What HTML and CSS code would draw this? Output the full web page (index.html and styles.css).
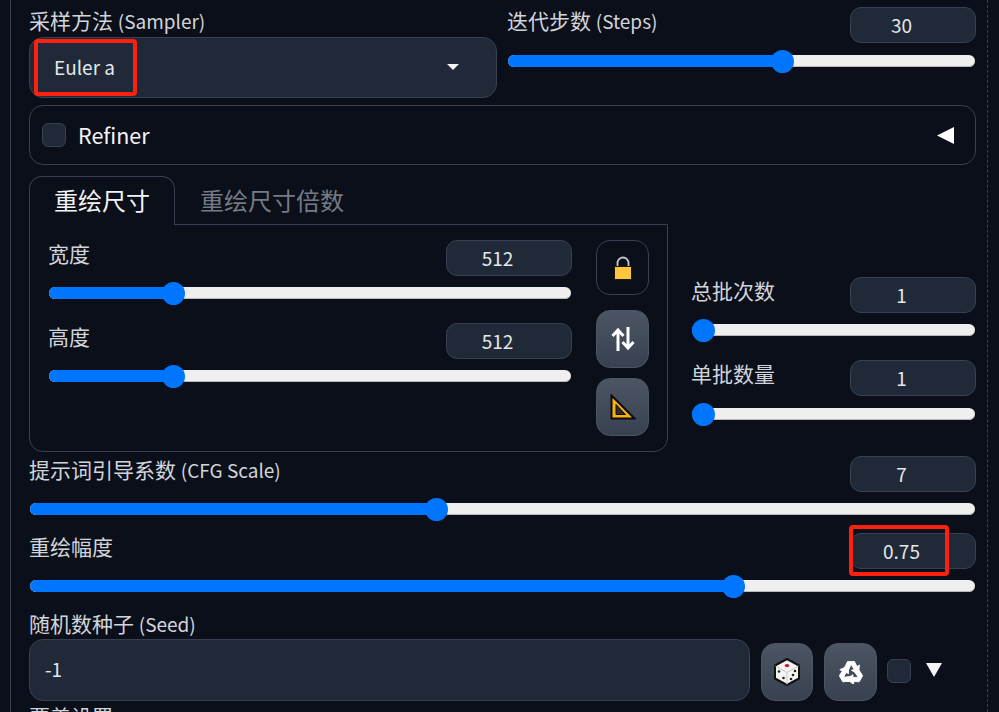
FILE: index.html
```html
<!DOCTYPE html>
<html lang="zh">
<head>
<meta charset="utf-8">
<title>img2img settings</title>
<link rel="stylesheet" href="styles.css">
</head>
<body>
<main class="page">
  <div class="content">
    <div class="row-two">
      <div class="field">
        <div class="label">采样方法 <span class="lat">(Sampler)</span></div>
        <div class="dropdown">
          <span>Euler a</span>
          <svg class="caret" width="12" height="6" viewBox="0 0 12 6"><path d="M0 0H12L6 6Z" fill="#f3f4f6"/></svg>
        </div>
      </div>
      <div class="slider-block steps">
        <div class="slider-head"><span class="label">迭代步数 <span class="lat">(Steps)</span></span><span class="num">30</span></div>
        <div class="track"><div class="fill" style="width:58.7%"><i class="thumb"></i></div></div>
      </div>
    </div>

    <div class="accordion">
      <span class="check"></span>
      <span class="acc-title">Refiner</span>
      <svg class="acc-arrow" width="17" height="17" viewBox="0 0 17 17"><path d="M0 8.500L17 0V17Z" fill="#fff"/></svg>
    </div>

    <div class="size-row">
      <div class="tabs">
        <div class="tab-bar">
          <div class="tab active">重绘尺寸</div>
          <div class="tab">重绘尺寸倍数</div>
        </div>
        <div class="panel">
          <div class="panel-sliders">
            <div class="slider-block">
              <div class="slider-head"><span class="label">宽度</span><span class="num">512</span></div>
              <div class="track"><div class="fill" style="width:23.9%"><i class="thumb"></i></div></div>
            </div>
            <div class="slider-block">
              <div class="slider-head"><span class="label">高度</span><span class="num">512</span></div>
              <div class="track"><div class="fill" style="width:23.9%"><i class="thumb"></i></div></div>
            </div>
          </div>
          <div class="panel-tools">
            <button class="tool lock" type="button">
              <svg width="20" height="24" viewBox="0 0 20 24">
                <path d="M4.500 12V7a5.500 5.500 0 0 1 11 0V12" fill="none" stroke="#c4c7cd" stroke-width="1.800"/>
                <rect x="1.500" y="10.500" width="17" height="13" rx="1" fill="#fdc73d" stroke="#1a1408"/>
              </svg>
            </button>
            <button class="tool swap" type="button">
              <svg width="24" height="24" viewBox="0 0 24 24" fill="none" stroke="#fff" stroke-width="3">
                <path d="M7 24V3M1.500 9L7 3L12.500 9"/>
                <path d="M17 0V21M11.500 15L17 21L22.500 15"/>
              </svg>
            </button>
            <button class="tool ruler" type="button">
              <svg width="26" height="26" viewBox="0 0 26 26">
                <path d="M1.500 1.500L24.500 24.500H1.500Z" fill="#fbb010" stroke="#0c0c0c" stroke-width="2"/>
                <path d="M6 10.500L15.500 20.500H6Z" fill="#2a2a2a" stroke="#0c0c0c"/>
              </svg>
            </button>
          </div>
        </div>
      </div>
      <div class="batch">
        <div class="slider-block">
          <div class="slider-head"><span class="label">总批次数</span><span class="num">1</span></div>
          <div class="track"><div class="fill" style="width:4.2%"><i class="thumb"></i></div></div>
        </div>
        <div class="slider-block wide-gap">
          <div class="slider-head"><span class="label">单批数量</span><span class="num">1</span></div>
          <div class="track"><div class="fill" style="width:4.2%"><i class="thumb"></i></div></div>
        </div>
      </div>
    </div>

    <div class="slider-block cfg">
      <div class="slider-head"><span class="label">提示词引导系数 <span class="lat">(CFG Scale)</span></span><span class="num">7</span></div>
      <div class="track"><div class="fill" style="width:43%"><i class="thumb"></i></div></div>
    </div>
    <div class="slider-block denoise">
      <div class="slider-head"><span class="label">重绘幅度</span><span class="num">0.75</span></div>
      <div class="track"><div class="fill" style="width:74.4%"><i class="thumb"></i></div></div>
    </div>

    <div class="seed">
      <div class="label">随机数种子 <span class="lat">(Seed)</span></div>
      <div class="seed-row">
        <div class="seed-input">-1</div>
        <button class="tool dice" type="button">
          <svg width="26" height="28" viewBox="0 0 26 28">
            <path d="M13 1L25 7.500V20.500L13 27L1 20.500V7.500Z" fill="#f4f4f2" stroke="#111" stroke-width="2" stroke-linejoin="round"/>
            <path d="M1.500 8L13 14.500L24.500 8M13 14.500V26.500" fill="none" stroke="#c9c9c6" stroke-width="1"/>
            <ellipse cx="13" cy="7.500" rx="2.400" ry="1.500" fill="#d2152a"/>
            <circle cx="5" cy="13.500" r="1.300" fill="#222"/><circle cx="9.500" cy="20" r="1.300" fill="#222"/>
            <circle cx="21" cy="13" r="1.300" fill="#222"/><circle cx="19" cy="17" r="1.300" fill="#222"/><circle cx="17" cy="21" r="1.300" fill="#222"/>
          </svg>
        </button>
        <button class="tool recycle" type="button">
          <svg width="24" height="24" viewBox="0 0 24 24" fill="#fff" stroke="#fff" stroke-width="0.800">
            <path id="arm" d="M4.800 9L8.500 1.500H15.500L18 6.500L20.500 5L19.500 13.500L12.500 10.500L15 9L12 4.500L9.800 9.500L9.200 11.500Z"/>
            <use href="#arm" transform="rotate(120 12 13)"/>
            <use href="#arm" transform="rotate(240 12 13)"/>
          </svg>
        </button>
        <span class="check"></span>
        <svg class="seed-arrow" width="16" height="14" viewBox="0 0 16 14"><path d="M0 0H16L8 14Z" fill="#f3f4f6"/></svg>
      </div>
    </div>

    <div class="label more">覆盖设置</div>

    <span class="mark mark-sampler"></span>
    <span class="mark mark-denoise"></span>
  </div>
</main>
</body>
</html>
```
FILE: styles.css
```css
* { box-sizing: border-box; }
html, body { margin: 0; height: 712px; overflow: hidden; background: #0b0f19; }
body { font-family: "Noto Sans CJK SC", "Noto Sans", sans-serif; color: #e5e7eb; }

.page {
  width: 978px;
  height: 712px;
  margin-left: 10px;
  border-left: 1px solid #374151;
  border-right: 1px dashed #374151;
  overflow: hidden;
}
.content {
  position: relative;
  margin: 0 11px 0 18px;
  padding-top: 7px;
  display: flex;
  flex-direction: column;
}

.label { height: 30px; font-size: 21px; line-height: 26px; color: #d1d5db; white-space: nowrap; }
.lat { font-size: 19px; line-height: 1; }

.row-two { display: grid; grid-template-columns: 468px 469px; column-gap: 10px; height: 91px; }
.field { display: flex; flex-direction: column; }
.dropdown {
  height: 61px;
  display: flex;
  align-items: center;
  justify-content: space-between;
  padding: 0 37px 2px 24px;
  background: #1f2937;
  border: 1px solid #374151;
  border-radius: 14px;
  font-size: 19px;
}

.slider-block { display: flex; flex-direction: column; gap: 11px; }
.slider-block.steps { gap: 12px; }
.slider-block.wide-gap { gap: 12px; }
.slider-head { display: flex; justify-content: space-between; align-items: flex-start; height: 36px; }
.num {
  width: 126px;
  height: 36px;
  padding-right: 23px;
  line-height: 34px;
  text-align: center;
  font-size: 19px;
  background: #1f2937;
  border: 1px solid #374151;
  border-radius: 11px;
}
.track { height: 12px; margin: 0 1px; background: #efefef; border-radius: 6px; box-shadow: inset 0 -1px 0 #b9b9b9; }
.fill {
  height: 12px;
  display: flex;
  justify-content: flex-end;
  align-items: center;
  background: #0075ff;
  border-radius: 6px 0 0 6px;
}
.thumb { flex: none; width: 23px; height: 23px; margin-right: -11.5px; border-radius: 50%; background: #0075ff; }

.accordion {
  margin-top: 7px;
  height: 60px;
  display: flex;
  align-items: center;
  padding: 0 21px 0 12px;
  border: 1px solid #374151;
  border-radius: 14px;
}
.check {
  flex: none;
  width: 24px;
  height: 24px;
  background: #1f2937;
  border: 1px solid #374151;
  border-radius: 6px;
}
.acc-title { margin-left: 12px; font-size: 21.5px; line-height: 28px; color: #f3f4f6; }
.acc-arrow { margin-left: auto; }

.size-row { margin-top: 11px; display: grid; grid-template-columns: 639px 285px; column-gap: 23px; height: 276px; }
.tab-bar { display: flex; height: 49px; margin-bottom: -1px; }
.tab {
  position: relative;
  padding: 0 24px;
  font-size: 24px;
  line-height: 46px;
  border: 1px solid transparent;
  border-bottom: 0;
  color: #757b86;
}
.tab.active {
  color: #f3f4f6;
  background: #0b0f19;
  border-color: #374151;
  border-radius: 13px 13px 0 0;
}
.panel {
  height: 228px;
  display: flex;
  gap: 24px;
  padding: 15px 18px 0;
  border: 1px solid #374151;
  border-radius: 0 0 14px 14px;
}
.panel-sliders { flex: 1; display: flex; flex-direction: column; gap: 24px; }
.panel-tools { flex: none; width: 53px; display: flex; flex-direction: column; }

.tool {
  display: flex;
  align-items: center;
  justify-content: center;
  padding: 0;
  border: 1px solid #4b5563;
  border-radius: 14px;
  background: linear-gradient(to bottom, #4b5563, #374151);
}
.tool.lock { height: 55px; background: transparent; border-color: #374151; }
.tool.swap { height: 58px; margin-top: 15px; }
.tool.ruler { height: 58px; margin-top: 10px; }

.batch { padding-top: 101px; display: flex; flex-direction: column; gap: 24px; }

.cfg { margin-top: 4px; }
.denoise { margin-top: 18px; }

.seed { margin-top: 18px; }
.seed .label { height: 29px; }
.seed-row { display: flex; align-items: center; height: 62px; }
.seed-input {
  width: 721px;
  height: 62px;
  line-height: 58px;
  padding-left: 15px;
  font-size: 19px;
  background: #1f2937;
  border: 1px solid #374151;
  border-radius: 14px;
}
.tool.dice { width: 52px; height: 58px; margin: 4px 0 0 11px; }
.tool.recycle { width: 53px; height: 58px; margin: 4px 10px 0 11px; }
.seed-arrow { margin-left: 15px; }
.seed-row .check { margin-top: 2px; }

.more { margin-top: 2px; }

.mark { position: absolute; border: 4px solid #ff2010; border-radius: 4px; }
.mark-sampler { left: 5px; top: 39px; width: 103px; height: 57px; }
.mark-denoise { left: 820px; top: 525px; width: 100px; height: 51px; }
```
